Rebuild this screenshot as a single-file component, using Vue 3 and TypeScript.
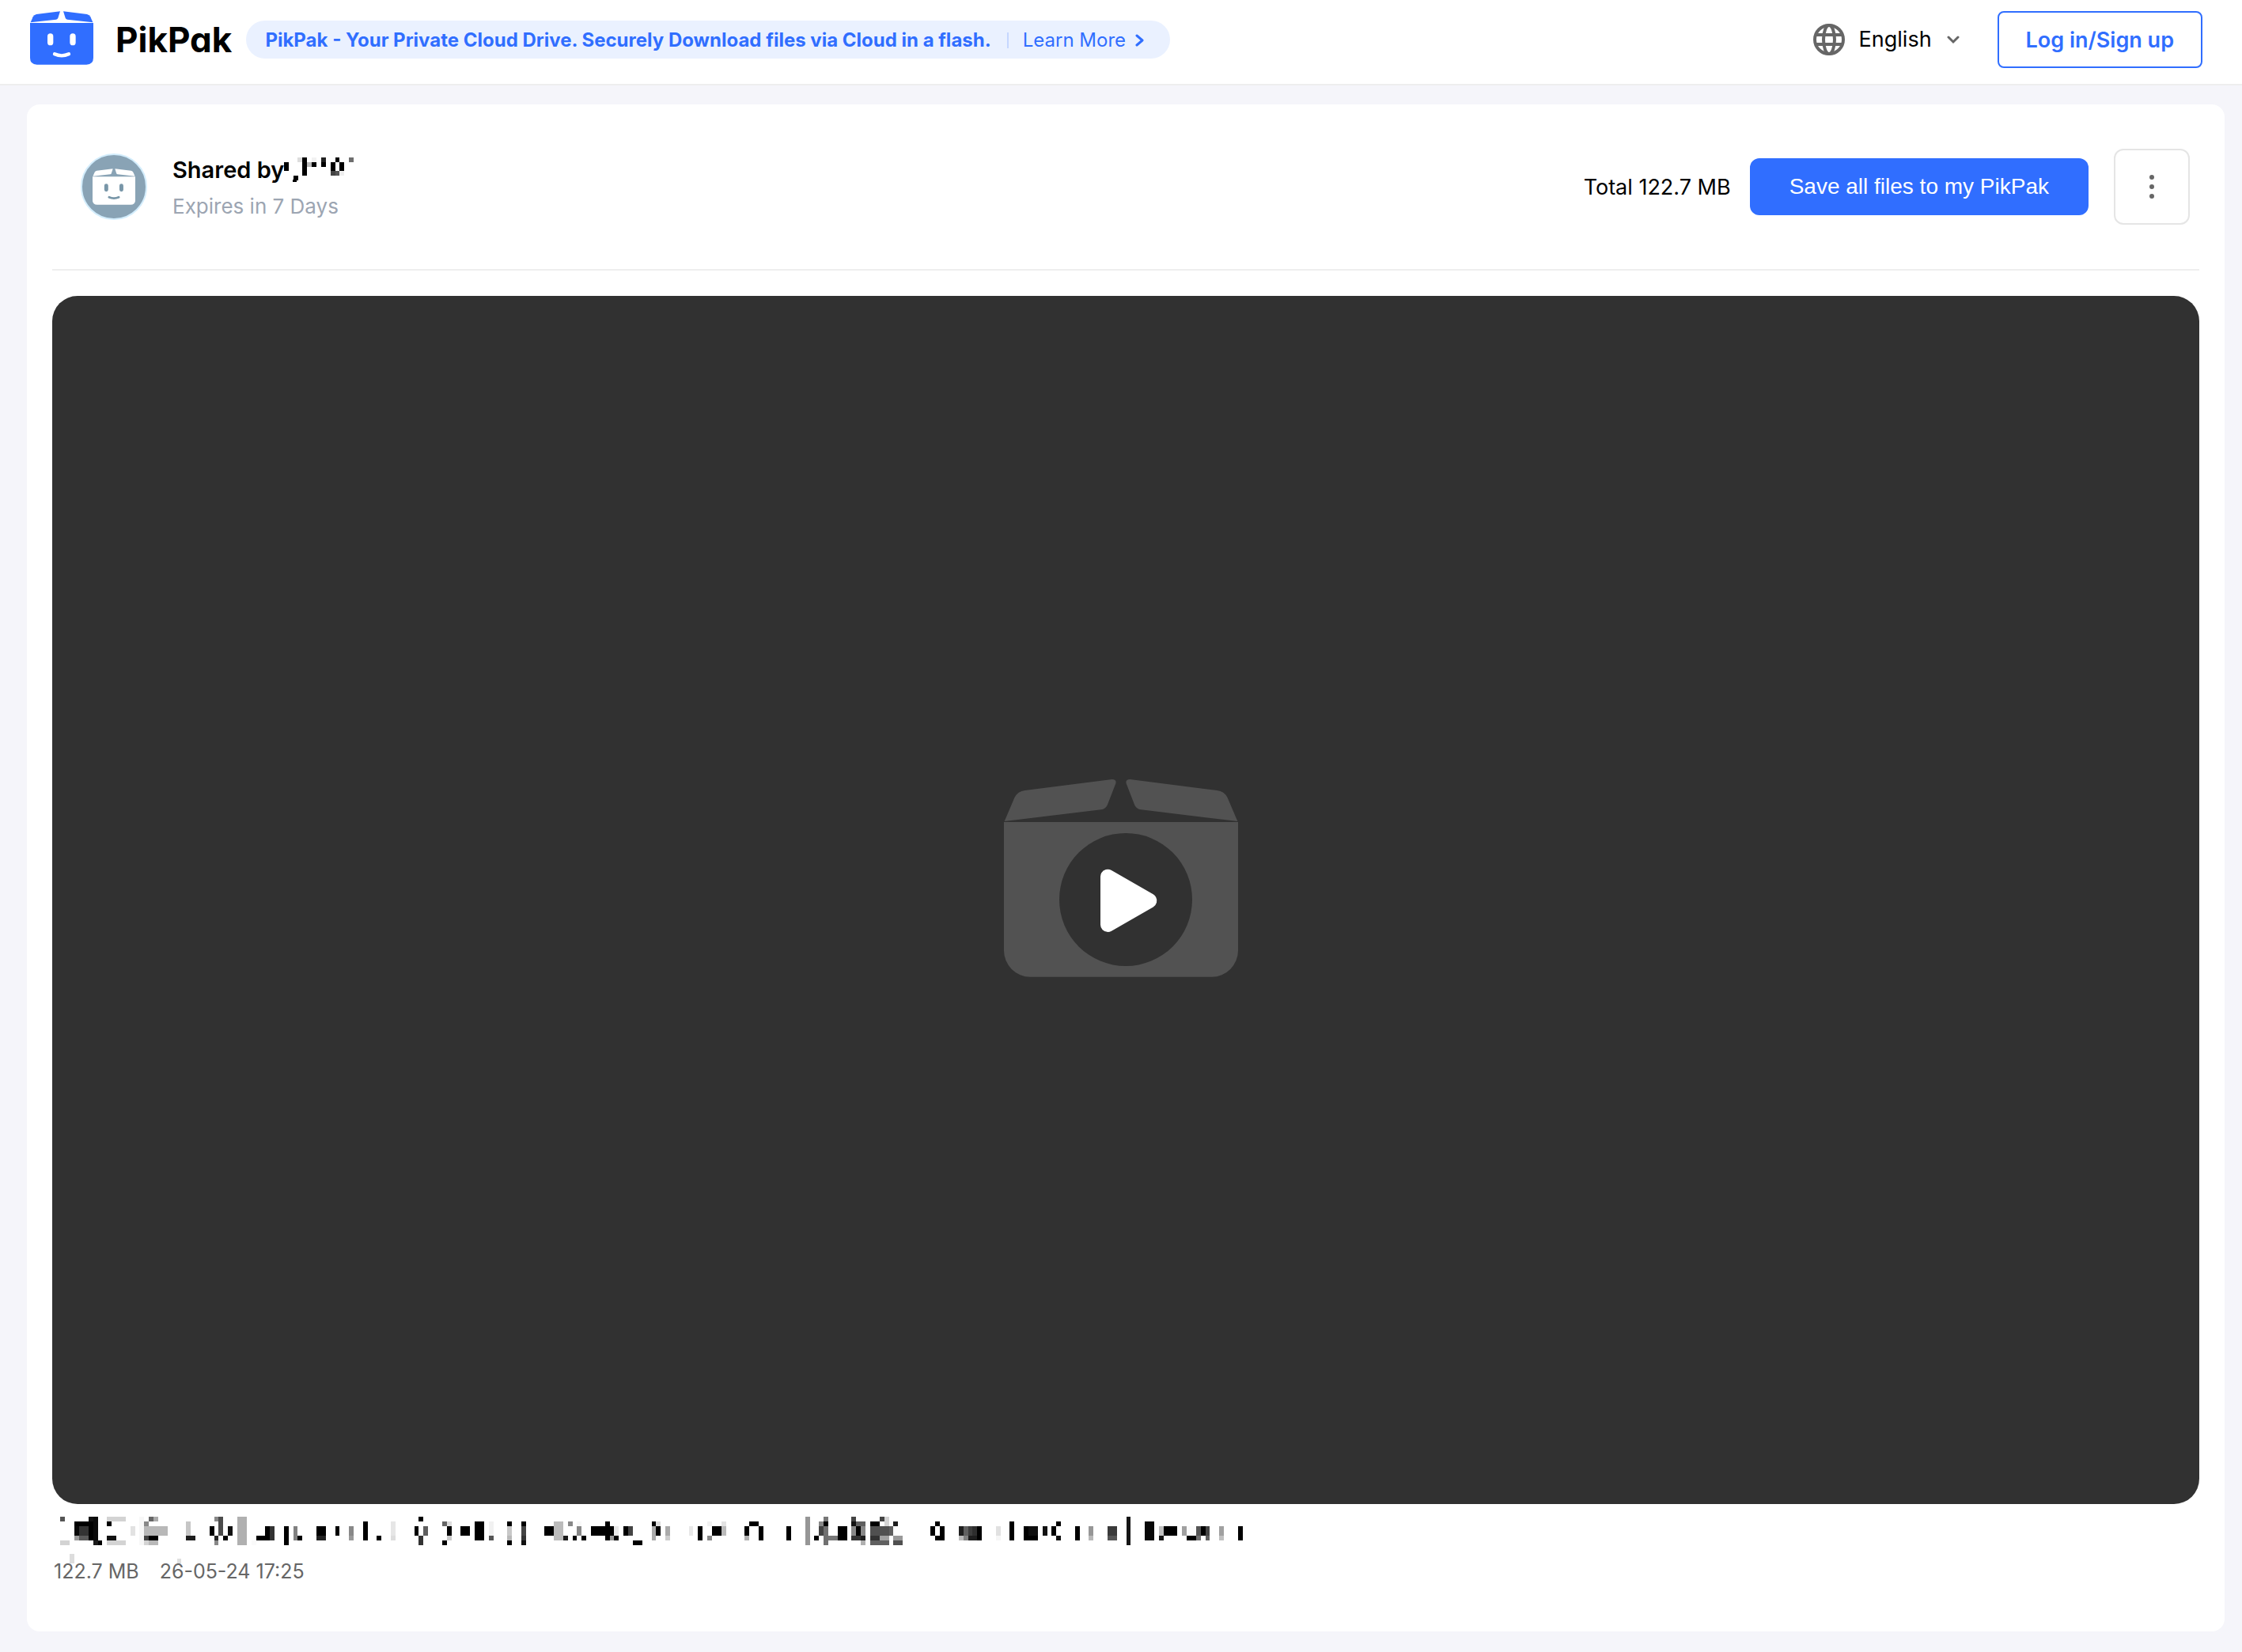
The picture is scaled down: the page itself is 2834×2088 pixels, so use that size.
<script setup lang="ts">
import { ref } from 'vue'

type Cell = [x: number, y: number, w: number, h: number, fill: string]

const language = ref('English')

const flapLeft = 'M2 43 L11 22 Q15 14 24 12 L114 1 L106 26 Q104 31 99 32 Z'
const flapRight = 'M238 43 L229 22 Q225 14 216 12 L126 1 L134 26 Q136 31 141 32 Z'
const boxBody = 'M0 45 H240 V177 Q240 203 214 203 H26 Q0 203 0 177 Z'

// Pixelated sharer name
const ownerCells: Cell[] = [
  [0, 6, 6, 11, '#000'], [12, 23, 6, 6, '#000'], [11, 28, 5, 3, '#000'],
  [17, 0, 6, 6, '#ddd'], [23, 0, 6, 23, '#000'], [29, 6, 6, 6, '#bbb'],
  [35, 0, 6, 6, '#f2f2f2'], [35, 6, 6, 6, '#000'], [47, 0, 6, 6, '#222'],
  [47, 6, 6, 6, '#000'], [65, 0, 5, 6, '#000'], [59, 6, 6, 11, '#000'],
  [70, 6, 6, 11, '#000'], [59, 17, 6, 6, '#444'], [65, 17, 5, 6, '#555'],
  [70, 17, 6, 6, '#eee'], [82, 0, 6, 6, '#6e6e6e'],
]

// Pixelated file name
const nameCells: Cell[] = [
  [76, 0, 6, 6, '#555'], [76, 30, 12, 6, '#d3d3d3'], [94, 6, 18, 6, '#000'],
  [112, 0, 6, 6, '#111'], [118, 0, 6, 30, '#0a0a0a'], [112, 6, 6, 24, '#000'],
  [94, 12, 6, 12, '#080808'], [100, 12, 12, 12, '#333'], [94, 24, 6, 6, '#999'],
  [100, 24, 12, 6, '#5a5a5a'], [118, 30, 6, 6, '#1a1a1a'], [124, 30, 5, 6, '#000'],
  [135, 0, 24, 6, '#d3d3d3'], [135, 6, 6, 6, '#000'], [135, 24, 12, 6, '#111'],
  [135, 30, 24, 6, '#d3d3d3'], [165, 12, 6, 12, '#e2e2e2'], [176, 0, 6, 36, '#f7f7f7'],
  [188, 0, 6, 6, '#666'], [194, 0, 6, 6, '#aaa'], [182, 6, 6, 6, '#888'],
  [182, 12, 30, 12, '#b8b8b8'], [182, 24, 6, 6, '#444'], [188, 24, 12, 6, '#000'],
  [182, 30, 6, 6, '#d3d3d3'], [188, 30, 12, 6, '#b8b8b8'], [235, 6, 6, 18, '#c6c6c6'],
  [235, 24, 12, 6, '#1e1e1e'], [265, 12, 6, 12, '#000'], [271, 0, 5, 6, '#888'],
  [276, 0, 6, 24, '#4c4c4c'], [271, 24, 5, 6, '#222'], [271, 30, 5, 6, '#888'],
  [282, 24, 6, 6, '#000'], [288, 12, 6, 12, '#111'], [300, 0, 12, 36, '#b0b0b0'],
  [318, 30, 6, 6, '#fafafa'], [324, 24, 17, 6, '#000'], [335, 12, 6, 12, '#000'],
  [341, 12, 6, 18, '#333'], [359, 12, 6, 24, '#000'], [371, 12, 5, 18, '#808080'],
  [376, 24, 6, 6, '#000'], [400, 12, 12, 12, '#000'], [400, 24, 12, 6, '#222'],
  [424, 12, 5, 12, '#000'], [441, 12, 6, 12, '#888'], [441, 24, 6, 6, '#999'],
  [459, 6, 6, 24, '#000'], [476, 24, 6, 6, '#000'], [494, 6, 6, 18, '#e6e6e6'],
  [494, 24, 6, 6, '#ddd'], [529, 0, 6, 6, '#000'], [524, 12, 5, 12, '#000'],
  [535, 12, 6, 12, '#5e5e5e'], [529, 24, 6, 12, '#333'], [559, 6, 6, 6, '#666'],
  [565, 6, 6, 6, '#ddd'], [565, 12, 6, 12, '#000'], [565, 24, 6, 6, '#ccc'],
  [559, 30, 6, 6, '#000'],
  [582, 12, 12, 12, '#000'], [600, 6, 12, 24, '#000'], [618, 6, 6, 18, '#f1f1f1'],
  [618, 24, 6, 6, '#555'], [641, 6, 6, 6, '#000'], [641, 12, 6, 12, '#c8c8c8'],
  [641, 24, 6, 6, '#b8b8b8'], [641, 30, 6, 6, '#000'], [659, 6, 6, 6, '#000'],
  [659, 12, 6, 12, '#444'], [659, 24, 6, 6, '#333'], [659, 30, 6, 6, '#111'],
  [688, 12, 12, 12, '#000'], [700, 6, 12, 24, '#bbb'], [718, 6, 6, 6, '#888'],
  [712, 24, 6, 6, '#1a1a1a'], [729, 6, 6, 6, '#f8f8f8'], [729, 12, 6, 12, '#888'],
  [724, 24, 5, 6, '#000'], [735, 24, 6, 6, '#000'], [747, 12, 18, 12, '#000'],
  [765, 6, 6, 24, '#000'], [771, 12, 5, 12, '#000'], [771, 24, 5, 6, '#999'],
  [776, 12, 6, 12, '#e9e9e9'], [776, 24, 6, 6, '#000'], [788, 12, 6, 12, '#000'],
  [794, 12, 6, 12, '#444'], [800, 30, 12, 6, '#000'], [824, 6, 5, 6, '#000'],
  [829, 6, 6, 6, '#ddd'], [824, 12, 5, 18, '#aaa'], [829, 12, 6, 12, '#000'],
  [841, 12, 6, 12, '#aaa'], [841, 24, 6, 6, '#ccc'], [871, 12, 5, 12, '#e8e8e8'],
  [882, 12, 6, 18, '#000'], [894, 6, 6, 6, '#f1f1f1'], [894, 24, 6, 6, '#888'],
  [900, 12, 12, 12, '#000'], [912, 6, 6, 6, '#e3e3e3'], [912, 12, 6, 12, '#bbb'],
  [947, 6, 12, 6, '#000'], [941, 12, 6, 12, '#000'], [941, 24, 6, 6, '#b0b0b0'],
  [959, 12, 6, 18, '#000'], [994, 12, 6, 18, '#000'], [1018, 0, 6, 36, '#969696'],
  [1041, 0, 6, 6, '#777'], [1035, 6, 6, 6, '#888'], [1041, 6, 6, 6, '#000'],
  [1035, 12, 6, 12, '#444'], [1041, 12, 6, 24, '#707070'], [1029, 24, 6, 6, '#000'],
  [1047, 24, 12, 6, '#777'], [1059, 12, 12, 18, '#000'], [1076, 0, 6, 6, '#444'],
  [1076, 6, 6, 6, '#111'], [1082, 6, 12, 6, '#606060'], [1076, 12, 6, 12, '#888'],
  [1082, 12, 6, 12, '#000'], [1088, 12, 6, 12, '#888'], [1076, 24, 12, 6, '#333'],
  [1088, 24, 6, 6, '#1e1e1e'], [1088, 30, 6, 6, '#b0b0b0'],
  [1100, 6, 12, 6, '#000'], [1112, 0, 6, 6, '#444'], [1118, 0, 6, 12, '#d3d3d3'],
  [1129, 6, 6, 6, '#1e1e1e'], [1100, 12, 24, 12, '#505050'], [1124, 12, 5, 12, '#606060'],
  [1100, 24, 12, 6, '#333'], [1112, 24, 12, 6, '#a0a0a0'], [1129, 24, 12, 6, '#999'],
  [1100, 30, 24, 6, '#606060'], [1129, 30, 12, 6, '#505050'], [1182, 6, 6, 6, '#000'],
  [1176, 12, 6, 12, '#000'], [1188, 12, 6, 12, '#000'], [1182, 24, 12, 6, '#000'],
  [1212, 12, 6, 12, '#1e1e1e'], [1218, 12, 6, 12, '#606060'], [1224, 12, 5, 12, '#3d3d3d'],
  [1229, 12, 6, 12, '#2e2e2e'], [1235, 12, 6, 18, '#000'], [1212, 24, 6, 6, '#bbb'],
  [1218, 24, 6, 6, '#808080'], [1224, 24, 11, 6, '#1e1e1e'], [1259, 12, 6, 12, '#e1e1e1'],
  [1259, 24, 6, 6, '#f6f6f6'], [1276, 6, 6, 24, '#000'], [1294, 12, 6, 18, '#000'],
  [1300, 12, 12, 12, '#0e0e0e'], [1300, 24, 12, 6, '#000'], [1318, 12, 6, 12, '#111'],
  [1329, 12, 6, 12, '#000'], [1335, 6, 6, 6, '#000'], [1335, 24, 6, 6, '#111'],
  [1359, 12, 6, 18, '#000'], [1376, 12, 6, 12, '#969696'], [1376, 24, 6, 6, '#b8b8b8'],
  [1400, 12, 12, 12, '#3a3a3a'], [1400, 24, 12, 6, '#555'], [1424, 0, 5, 36, '#151515'],
  [1447, 6, 12, 24, '#080808'], [1465, 12, 6, 12, '#c0c0c0'], [1465, 24, 6, 6, '#151515'],
  [1471, 12, 17, 12, '#000'], [1494, 12, 6, 12, '#a0a0a0'], [1500, 12, 12, 12, '#fbfbfb'],
  [1500, 24, 12, 6, '#000'], [1512, 12, 6, 12, '#555'], [1512, 24, 6, 6, '#707070'],
  [1518, 12, 6, 12, '#000'], [1524, 12, 5, 12, '#444'], [1524, 24, 5, 6, '#606060'],
  [1541, 12, 6, 12, '#a0a0a0'], [1541, 24, 6, 6, '#c0c0c0'], [1565, 12, 6, 18, '#000'],
  [88, 47, 6, 12, '#ddd'], [224, 53, 5, 6, '#e0e0e0'],
]
</script>

<template>
  <div class="page">
    <header class="topbar">
      <a class="brand" href="#">
        <svg class="brand-icon" viewBox="0 0 240 204" aria-hidden="true">
          <g fill="#306eff">
            <path :d="flapLeft" />
            <path :d="flapRight" />
            <path :d="boxBody" />
          </g>
          <rect x="66" y="85" width="22" height="45" rx="11" fill="#fff" />
          <rect x="151" y="85" width="22" height="45" rx="11" fill="#fff" />
          <path d="M93 163 Q120 175 147 163" fill="none" stroke="#fff" stroke-width="13" stroke-linecap="round" />
        </svg>
        <span class="brand-name">PikPak</span>
      </a>

      <div class="promo">
        <span class="promo-text">PikPak - Your Private Cloud Drive. Securely Download files via Cloud in a flash.</span>
        <span class="promo-rule"></span>
        <a class="promo-link" href="#">
          Learn More
          <svg width="12" height="16" viewBox="0 0 12 16" aria-hidden="true">
            <path d="M2 2 L9 8 L2 14" fill="none" stroke="#306eff" stroke-width="3" stroke-linecap="round" stroke-linejoin="round" />
          </svg>
        </a>
      </div>

      <div class="top-actions">
        <label class="language">
          <svg width="40" height="40" viewBox="0 0 40 40" fill="none" stroke="#666" stroke-width="4" aria-hidden="true">
            <circle cx="20" cy="20" r="18" />
            <ellipse cx="20" cy="20" rx="7" ry="18" />
            <path d="M4 14 H36 M4 26 H36" />
          </svg>
          <select v-model="language" class="language-select" aria-label="English">
            <option>English</option>
          </select>
          <svg width="16" height="12" viewBox="0 0 16 12" aria-hidden="true">
            <path d="M2 3 L8 9 L14 3" fill="none" stroke="#666" stroke-width="3" stroke-linecap="round" />
          </svg>
        </label>
        <button class="login" type="button">Log in/Sign up</button>
      </div>
    </header>

    <main class="card">
      <section class="share">
        <div class="avatar">
          <svg class="avatar-icon" viewBox="0 0 240 204" aria-hidden="true">
            <g fill="#fff">
              <path :d="flapLeft" />
              <path :d="flapRight" />
              <path :d="boxBody" />
            </g>
            <rect x="66" y="85" width="22" height="45" rx="11" fill="#7896a8" />
            <rect x="151" y="85" width="22" height="45" rx="11" fill="#7896a8" />
            <path d="M93 161 Q120 173 147 161" fill="none" stroke="#7896a8" stroke-width="13" stroke-linecap="round" />
          </svg>
        </div>
        <div class="owner">
          <div class="owner-name">
            <span>Shared by</span>
            <svg width="90" height="32" viewBox="0 0 90 32" shape-rendering="crispEdges" aria-hidden="true">
              <rect v-for="(c, i) in ownerCells" :key="i" :x="c[0]" :y="c[1]" :width="c[2]" :height="c[3]" :fill="c[4]" />
            </svg>
          </div>
          <div class="expires">Expires in 7 Days</div>
        </div>
        <span class="total">Total 122.7 MB</span>
        <button class="save" type="button">Save all files to my PikPak</button>
        <button class="more" type="button" aria-haspopup="menu">
          <svg width="8" height="32" viewBox="0 0 8 32" fill="#666" aria-hidden="true">
            <circle cx="4" cy="4" r="3" />
            <circle cx="4" cy="16" r="3" />
            <circle cx="4" cy="28" r="3" />
          </svg>
        </button>
      </section>

      <button class="player" type="button">
        <svg class="player-icon" viewBox="0 0 924 912" aria-hidden="true">
          <g fill="#525252">
            <path d="M2 159 L40 70 Q52 45 80 42 L410 0 Q428 0 424 16 L392 98 Q385 112 368 115 Z" />
            <path d="M886 159 L848 70 Q836 45 808 42 L478 0 Q460 0 464 16 L496 98 Q503 112 520 115 Z" />
            <path d="M0 162 H888 V649 A100 100 0 0 1 788 749 H100 A100 100 0 0 1 0 649 Z" />
          </g>
          <circle cx="462" cy="456" r="252" fill="#313131" />
          <path d="M394 369 V551 L552 460 Z" fill="#fff" stroke="#fff" stroke-width="56" stroke-linejoin="round" />
        </svg>
      </button>

      <svg class="name-cells" height="36" width="1506" viewBox="66 0 1506 36" shape-rendering="crispEdges" aria-hidden="true">
        <rect v-for="(c, i) in nameCells" :key="i" :x="c[0]" :y="c[1]" :width="c[2]" :height="c[3]" :fill="c[4]" />
      </svg>
      <div class="meta">
        <span>122.7 MB</span>
        <time>26-05-24 17:25</time>
      </div>
    </main>
  </div>
</template>

<style>
body {
  margin: 0;
  background: #f5f5fa;
}
</style>

<style scoped>
.page {
  font-family: Inter, "Liberation Sans", sans-serif;
  color: #000;
  background: #f5f5fa;
  padding-bottom: 26px;
}

button,
select {
  font: inherit;
  margin: 0;
  cursor: pointer;
}

a {
  text-decoration: none;
}

svg {
  display: block;
  flex: none;
}

.topbar {
  display: flex;
  align-items: center;
  padding: 14px 50px 20px 38px;
  background: #fff;
  border-bottom: 2px solid #eee;
}

.brand {
  display: flex;
  align-items: center;
  gap: 28px;
  color: #000;
}

.brand-icon {
  width: 80px;
  height: 68px;
  margin-bottom: 4px;
}

.brand-name {
  font-size: 44px;
  line-height: 48px;
  font-weight: 700;
  font-feature-settings: "cv11";
}

.promo {
  display: flex;
  align-items: center;
  box-sizing: border-box;
  height: 48px;
  margin-left: 18px;
  padding: 2px 32px 0 24px;
  border-radius: 24px;
  background: #eaf1ff;
  color: #306eff;
  font-size: 24px;
  line-height: 32px;
  white-space: nowrap;
}

.promo-text {
  font-weight: 700;
}

.promo-rule {
  width: 2px;
  height: 20px;
  margin: 0 18px 0 20px;
  background: #c6d7ff;
}

.promo-link {
  display: flex;
  align-items: center;
  gap: 12px;
  color: #306eff;
}

.top-actions {
  display: flex;
  align-items: center;
  gap: 48px;
  margin-left: auto;
}

.language {
  display: flex;
  align-items: center;
  gap: 18px;
}

.language-select {
  appearance: none;
  border: 0;
  padding: 0;
  background: none;
  color: #000;
  font-size: 27px;
  line-height: 36px;
}

.login {
  height: 72px;
  padding: 0 34px;
  border: 2px solid #306eff;
  border-radius: 8px;
  background: #fff;
  color: #306eff;
  font-size: 27px;
  font-weight: 600;
}

.card {
  margin: 24px 22px 0 34px;
  padding: 0 32px 60px;
  border-radius: 16px;
  background: #fff;
}

.share {
  display: flex;
  align-items: center;
  height: 208px;
  padding: 0 12px 0 36px;
  border-bottom: 2px solid #eee;
}

.avatar {
  display: flex;
  align-items: center;
  justify-content: center;
  box-sizing: border-box;
  width: 84px;
  height: 84px;
  border: 2px solid #d3edfc;
  border-radius: 50%;
  background: #89a3b5;
}

.avatar-icon {
  width: 54px;
  height: 46px;
}

.owner {
  margin-left: 32px;
  padding-top: 4px;
}

.owner-name {
  display: flex;
  align-items: center;
  font-size: 29px;
  line-height: 40px;
  font-weight: 600;
}

.expires {
  margin-top: 6px;
  color: #9ca5b2;
  font-size: 26px;
  line-height: 40px;
}

.total {
  margin-left: auto;
  padding-top: 2px;
  font-size: 27px;
  line-height: 32px;
}

.save {
  height: 72px;
  margin: 0 32px 0 24px;
  padding: 0 50px;
  border: 0;
  border-radius: 12px;
  background: #306eff;
  color: #fff;
  font-family: "Liberation Sans", Arial, sans-serif;
  font-size: 28px;
}

.more {
  display: flex;
  align-items: center;
  justify-content: center;
  width: 96px;
  height: 96px;
  padding: 0;
  border: 2px solid #e5e5e5;
  border-radius: 12px;
  background: #fff;
}

.player {
  display: flex;
  align-items: center;
  justify-content: center;
  width: 100%;
  aspect-ratio: 16 / 9;
  margin-top: 32px;
  padding: 0;
  border: 0;
  border-radius: 32px;
  background: #313131;
}

.player-icon {
  width: 308px;
  height: 304px;
}

.name-cells {
  margin-top: 16px;
  overflow: visible;
}

.meta {
  display: flex;
  gap: 26px;
  margin-top: 17px;
  padding-left: 2px;
  color: #666;
  font-size: 25px;
  line-height: 32px;
}
</style>
